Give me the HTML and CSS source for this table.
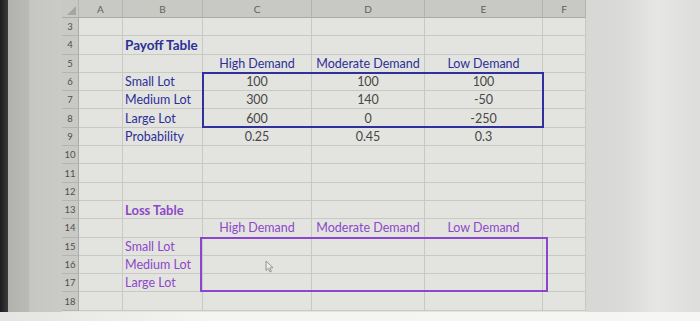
FILE: index.html
```html
<!DOCTYPE html>
<html>
<head>
<meta charset="utf-8">
<link rel="stylesheet" href="styles.css">
</head>
<body>
<div class="screen">
  <div class="main">
    <div class="edge"></div>
    <div class="bezel"></div>
    <div class="stack">
    <div class="sheet">
      <div class="hd corner"><span class="tri"></span></div>
      <div class="hd">A</div><div class="hd">B</div><div class="hd">C</div><div class="hd">D</div><div class="hd">E</div><div class="hd">F</div>

      <div class="rh">3</div><div class="c"></div><div class="c"></div><div class="c"></div><div class="c"></div><div class="c"></div><div class="c"></div>
      <div class="rh">4</div><div class="c"></div><div class="c lbl title">Payoff Table</div><div class="c"></div><div class="c"></div><div class="c"></div><div class="c"></div>
      <div class="rh">5</div><div class="c"></div><div class="c"></div><div class="c ctr lbl">High Demand</div><div class="c ctr lbl">Moderate Demand</div><div class="c ctr lbl">Low Demand</div><div class="c"></div>
      <div class="rh">6</div><div class="c"></div><div class="c lbl">Small Lot</div><div class="c ctr num">100</div><div class="c ctr num">100</div><div class="c ctr num">100</div><div class="c"></div>
      <div class="rh">7</div><div class="c"></div><div class="c lbl">Medium Lot</div><div class="c ctr num">300</div><div class="c ctr num">140</div><div class="c ctr num">-50</div><div class="c"></div>
      <div class="rh">8</div><div class="c"></div><div class="c lbl">Large Lot</div><div class="c ctr num">600</div><div class="c ctr num">0</div><div class="c ctr num">-250</div><div class="c"></div>
      <div class="rh">9</div><div class="c"></div><div class="c lbl">Probability</div><div class="c ctr num">0.25</div><div class="c ctr num">0.45</div><div class="c ctr num">0.3</div><div class="c"></div>
      <div class="rh">10</div><div class="c"></div><div class="c"></div><div class="c"></div><div class="c"></div><div class="c"></div><div class="c"></div>
      <div class="rh">11</div><div class="c"></div><div class="c"></div><div class="c"></div><div class="c"></div><div class="c"></div><div class="c"></div>
      <div class="rh">12</div><div class="c"></div><div class="c"></div><div class="c"></div><div class="c"></div><div class="c"></div><div class="c"></div>
      <div class="rh">13</div><div class="c"></div><div class="c plbl title">Loss Table</div><div class="c"></div><div class="c"></div><div class="c"></div><div class="c"></div>
      <div class="rh">14</div><div class="c"></div><div class="c"></div><div class="c ctr plbl">High Demand</div><div class="c ctr plbl">Moderate Demand</div><div class="c ctr plbl">Low Demand</div><div class="c"></div>
      <div class="rh">15</div><div class="c"></div><div class="c plbl">Small Lot</div><div class="c"></div><div class="c"></div><div class="c"></div><div class="c"></div>
      <div class="rh">16</div><div class="c"></div><div class="c plbl">Medium Lot</div><div class="c cur-cell"><svg class="cursor" width="9" height="13" viewBox="0 0 9 13"><path d="M1 1 L1 10.5 L3.3 8.4 L5 12 L6.4 11.3 L4.8 7.9 L8 7.7 Z" fill="#ececea" stroke="#8a8a8a" stroke-width="0.9" stroke-linejoin="round"/></svg></div><div class="c"></div><div class="c"></div><div class="c"></div>
      <div class="rh">17</div><div class="c"></div><div class="c plbl">Large Lot</div><div class="c"></div><div class="c"></div><div class="c"></div><div class="c"></div>
      <div class="rh">18</div><div class="c"></div><div class="c"></div><div class="c"></div><div class="c"></div><div class="c"></div><div class="c"></div>
    </div>
    <div class="sheet overlay">
      <div class="box payoff"></div>
      <div class="box loss"></div>
    </div>
    </div>
    <div class="right"></div>
  </div>
  <div class="bottom"></div>
</div>
</body>
</html>
```

FILE: styles.css
```css
html, body {
  margin: 0;
  padding: 0;
  width: 700px;
  height: 321px;
  overflow: hidden;
  background: #d8d9d6;
  font-family: Lato, "Open Sans", sans-serif;
}

.screen {
  display: flex;
  flex-direction: column;
  width: 700px;
  height: 321px;
}

.main {
  display: flex;
  height: 312px;
}

.edge {
  width: 8px;
  background: linear-gradient(90deg, #1c1c1e, #3a3a3c);
}

.bezel {
  width: 54px;
  background: linear-gradient(90deg, #b1b2ae 0px, #b9bab6 20px, #c6c7c3 22px, #cacbc7 54px);
}

.stack {
  display: grid;
}

.sheet {
  grid-area: 1 / 1;
  display: grid;
  grid-template-columns: 17px 44px 80px 109px 113px 118px 43px;
  grid-template-rows: 18px repeat(16, 18.3px);
  background: #e3e4e0;
}

.overlay {
  background: transparent;
  pointer-events: none;
}

.hd {
  background: #c8c9c5;
  border-right: 1px solid #b3b4b0;
  border-bottom: 1px solid #a9aaa6;
  color: #5f605d;
  font-size: 10px;
  display: flex;
  align-items: center;
  justify-content: center;
  box-sizing: border-box;
}

.corner {
  position: relative;
}

.tri {
  position: absolute;
  right: 2px;
  bottom: 2px;
  width: 0;
  height: 0;
  border-left: 9px solid transparent;
  border-bottom: 9px solid #a5a6a2;
}

.rh {
  background: #c9cac6;
  border-right: 1px solid #a9aaa6;
  border-bottom: 1px solid #b4b5b1;
  color: #4f504d;
  font-size: 9.5px;
  display: flex;
  align-items: center;
  justify-content: center;
  box-sizing: border-box;
}

.c {
  border-right: 1px solid #c8c9c5;
  border-bottom: 1px solid #c8c9c5;
  box-sizing: border-box;
  font-size: 12.5px;
  display: flex;
  align-items: center;
  padding-left: 2px;
  white-space: nowrap;
  color: #4a4a4a;
}

.ctr {
  justify-content: center;
  padding-left: 0;
}

.lbl {
  color: #2c2f98;
}

.plbl {
  color: #8d48c9;
}

.num {
  color: #474747;
}

.title {
  font-weight: bold;
  font-size: 13.5px;
}

.plbl.title {
  font-size: 13px;
}

.cur-cell {
  position: relative;
}

.cursor {
  position: absolute;
  left: 62px;
  top: 4px;
}

.box {
  box-sizing: border-box;
}

.payoff {
  grid-column: 4 / 7;
  grid-row: 5 / 8;
  border: 2px solid #30309a;
  margin: -1px -1px 0 -1px;
}

.loss {
  grid-column: 4 / 7;
  grid-row: 14 / 17;
  border: 2px solid #8c45cf;
  margin: -1px -5px 0 -3px;
}

.right {
  flex: 1;
  background: linear-gradient(90deg, #d7d8d5 0px, #dbdcd9 40px, #e6e7e4 70px, #dedfdc 110px);
}

.bottom {
  height: 9px;
  background: linear-gradient(90deg, #e4e4e2, #f4f4f3 30%, #f6f6f5);
}
```
